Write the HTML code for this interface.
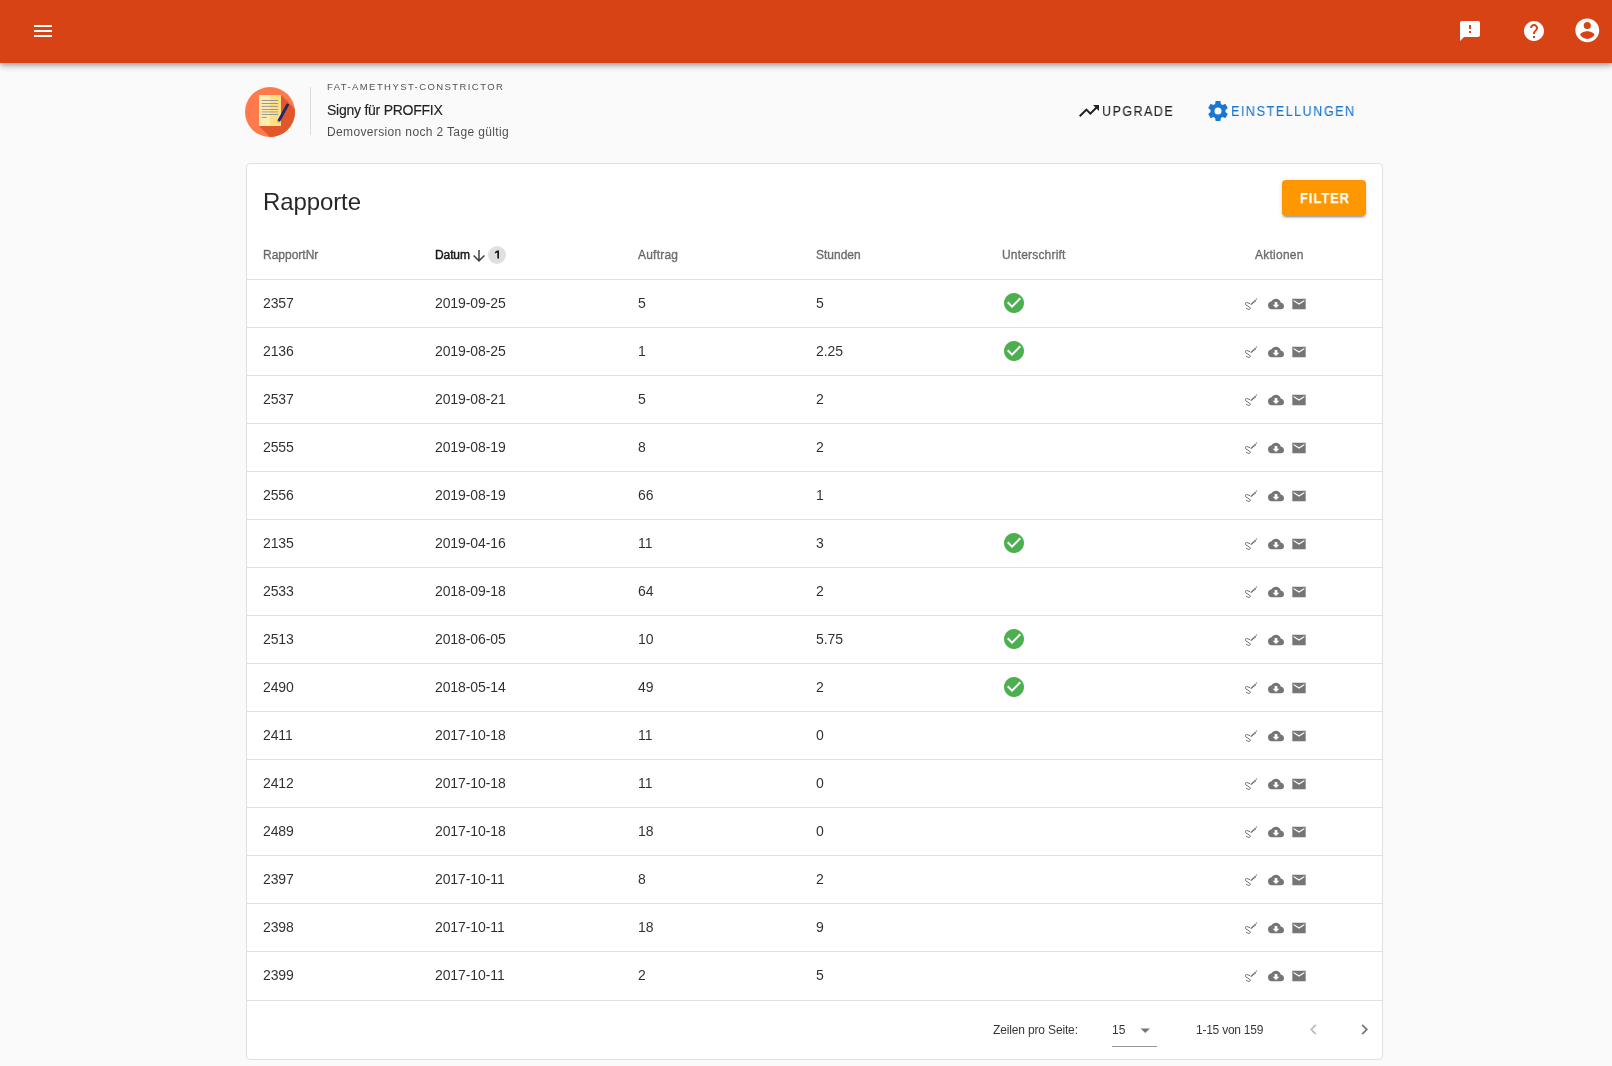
<!DOCTYPE html>
<html><head><meta charset="utf-8">
<style>
html,body{margin:0;padding:0;}
body{width:1612px;height:1066px;overflow:hidden;background:#fafafa;position:relative;font-family:"Liberation Sans",sans-serif;color:rgba(0,0,0,.87);}
.a{position:absolute;}
.t{position:absolute;white-space:nowrap;line-height:1;will-change:transform;}
svg{position:absolute;display:block;}
#bar{left:0;top:0;width:1612px;height:63px;background:#d84315;box-shadow:0 2px 4px -1px rgba(0,0,0,.2),0 4px 5px 0 rgba(0,0,0,.14),0 1px 10px 0 rgba(0,0,0,.12);z-index:2;}
#card{left:246px;top:163px;width:1135px;height:895px;border:1px solid #e0e0e0;border-radius:4px;background:#fff;}
.hd{font-size:12px;color:rgba(0,0,0,.5);-webkit-text-stroke:0.4px currentColor;}
.cell{font-size:14px;color:rgba(0,0,0,.82);letter-spacing:-0.1px;}
.dv{position:absolute;left:247px;width:1135px;height:1px;background:#e0e0e0;}
</style></head><body>
<div id="bar" class="a">
  <svg style="left:31px;top:19px" width="24" height="24" viewBox="0 0 24 24"><path fill="#fff" d="M3 18h18v-2H3v2zm0-5h18v-2H3v2zm0-7v2h18V6H3z"/></svg>
  <svg style="left:1458px;top:19px" width="24" height="24" viewBox="0 0 24 24"><path fill="#fff" d="M20 2H4c-1.1 0-1.99.9-1.99 2L2 22l4-4h14c1.1 0 2-.9 2-2V4c0-1.1-.9-2-2-2zm-7 12h-2v-2h2v2zm0-4h-2V6h2v4z"/></svg>
  <svg style="left:1522px;top:19px" width="24" height="24" viewBox="0 0 24 24"><path fill="#fff" d="M12 2C6.48 2 2 6.48 2 12s4.48 10 10 10 10-4.48 10-10S17.52 2 12 2zm1 17h-2v-2h2v2zm2.07-7.75l-.9.92C13.45 12.9 13 13.5 13 15h-2v-.5c0-1.1.45-2.1 1.17-2.83l1.24-1.26c.37-.36.59-.86.59-1.41 0-1.1-.9-2-2-2s-2 .9-2 2H8c0-2.21 1.79-4 4-4s4 1.79 4 4c0 .88-.36 1.68-.93 2.25z"/></svg>
  <svg style="left:1573.4px;top:16.2px" width="28.6" height="28.6" viewBox="0 0 24 24"><path fill="#fff" d="M12,19.2C9.5,19.2 7.29,17.92 6,16C6.03,14 10,12.9 12,12.9C14,12.9 17.97,14 18,16C16.71,17.92 14.5,19.2 12,19.2M12,5A3,3 0 0,1 15,8A3,3 0 0,1 12,11A3,3 0 0,1 9,8A3,3 0 0,1 12,5M12,2A10,10 0 0,0 2,12A10,10 0 0,0 12,22A10,10 0 0,0 22,12C22,6.47 17.5,2 12,2Z"/></svg>
</div>

<!-- brand -->
<svg style="left:245px;top:87px" width="50" height="50" viewBox="0 0 50 50">
  <defs><clipPath id="cc"><circle cx="25" cy="25" r="25"/></clipPath></defs>
  <circle cx="25" cy="25" r="25" fill="#ff7a4a"/>
  <g clip-path="url(#cc)"><polygon points="36,8 36,39 14,39 60,85 90,62" fill="#e1572b"/></g>
  <rect x="14" y="8" width="11" height="31" fill="#ffecb0"/>
  <rect x="25" y="8" width="11" height="31" fill="#ffdf86"/>
  <g stroke="#8c8f96" stroke-width="0.9">
    <line x1="16.6" y1="13.5" x2="33.2" y2="13.5"/>
    <line x1="16.6" y1="16.5" x2="33.2" y2="16.5"/>
    <line x1="16.6" y1="19.4" x2="33.2" y2="19.4"/>
    <line x1="16.6" y1="22.5" x2="33.2" y2="22.5"/>
    <line x1="16.6" y1="24.9" x2="33.2" y2="24.9" stroke="#b5ac90" stroke-width="1.2"/>
    <line x1="16.6" y1="27.5" x2="33.2" y2="27.5"/>
    <line x1="16.6" y1="30.4" x2="21.8" y2="30.4"/>
  </g>
  <line x1="43.1" y1="16.9" x2="33.6" y2="34.3" stroke="#1d2a6b" stroke-width="2.9" stroke-linecap="butt"/>
  <polygon points="34.9,35.04 32.3,33.56 32.4,36.6" fill="#f2b619"/>
</svg>
<div class="a" style="left:310px;top:87px;width:1px;height:48px;background:#dcdcdc"></div>
<div class="t" style="left:327.3px;top:82.4px;font-size:9.5px;letter-spacing:1.42px;color:rgba(0,0,0,.7)">FAT-AMETHYST-CONSTRICTOR</div>
<div class="t" style="left:327px;top:103.2px;font-size:14px;letter-spacing:-0.25px;-webkit-text-stroke:0.15px currentColor;color:rgba(0,0,0,.87)">Signy für PROFFIX</div>
<div class="t" style="left:327px;top:125.7px;font-size:12px;letter-spacing:0.36px;color:rgba(0,0,0,.7)">Demoversion noch 2 Tage gültig</div>

<!-- actions -->
<svg style="left:1077px;top:99px" width="24" height="24" viewBox="0 0 24 24"><path fill="rgba(0,0,0,.87)" d="M16,6L18.29,8.29L13.41,13.17L9.41,9.17L2,16.59L3.41,18L9.41,12L13.41,16L19.71,9.71L22,12V6H16Z"/></svg>
<div class="t" style="left:1102px;top:104.4px;font-size:14px;letter-spacing:1.56px;-webkit-text-stroke:0.1px currentColor;transform:scaleX(.9);transform-origin:0 0;color:rgba(0,0,0,.87)">UPGRADE</div>
<svg style="left:1205.6px;top:98.7px" width="24" height="24" viewBox="0 0 24 24"><path fill="#1976d2" d="M12,15.5A3.5,3.5 0 0,1 8.5,12A3.5,3.5 0 0,1 12,8.5A3.5,3.5 0 0,1 15.5,12A3.5,3.5 0 0,1 12,15.5M19.43,12.97C19.47,12.65 19.5,12.33 19.5,12C19.5,11.67 19.47,11.34 19.43,11L21.54,9.37C21.73,9.22 21.78,8.95 21.66,8.73L19.66,5.27C19.54,5.05 19.27,4.96 19.05,5.05L16.56,6.05C16.04,5.66 15.5,5.32 14.87,5.07L14.5,2.42C14.46,2.18 14.25,2 14,2H10C9.75,2 9.54,2.18 9.5,2.42L9.13,5.07C8.5,5.32 7.96,5.66 7.44,6.05L4.95,5.05C4.73,4.96 4.46,5.05 4.34,5.27L2.34,8.73C2.21,8.95 2.27,9.22 2.46,9.37L4.57,11C4.53,11.34 4.5,11.67 4.5,12C4.5,12.33 4.53,12.65 4.57,12.97L2.46,14.63C2.27,14.78 2.21,15.05 2.34,15.27L4.34,18.73C4.46,18.95 4.73,19.03 4.95,18.95L7.44,17.94C7.96,18.34 8.5,18.68 9.13,18.93L9.5,21.58C9.54,21.82 9.75,22 10,22H14C14.25,22 14.46,21.82 14.5,21.58L14.87,18.93C15.5,18.67 16.04,18.34 16.56,17.94L19.05,18.95C19.27,19.03 19.54,18.95 19.66,18.73L21.66,15.27C21.78,15.05 21.73,14.78 21.54,14.63L19.43,12.97Z"/></svg>
<div class="t" style="left:1231px;top:104.4px;font-size:14px;letter-spacing:1.68px;-webkit-text-stroke:0.1px currentColor;transform:scaleX(.9);transform-origin:0 0;color:#1976d2">EINSTELLUNGEN</div>

<svg width="0" height="0" style="position:absolute;left:0;top:0">
  <defs>
    <g id="chk"><path fill="#4caf50" d="M12 2C6.5 2 2 6.5 2 12S6.5 22 12 22 22 17.5 22 12 17.5 2 12 2M10 17L5 12L6.41 10.59L10 14.17L17.59 6.58L19 8L10 17Z"/></g>
    <g id="cld"><path fill="rgba(0,0,0,.54)" d="M17,13L12,18L7,13H10V9H14V13M19.35,10.03C18.67,6.59 15.64,4 12,4C9.11,4 6.6,5.64 5.35,8.03C2.34,8.36 0,10.9 0,14A6,6 0 0,0 6,20H19A5,5 0 0,0 24,15C24,12.36 21.95,10.22 19.35,10.03Z"/></g>
    <g id="mail"><path fill="rgba(0,0,0,.54)" d="M22 4H2v16h20V4zm-2 4l-8 5-8-5V6l8 5 8-5v2z"/></g>
    <g id="sig" fill="none" stroke="rgba(0,0,0,.54)" stroke-linecap="round" stroke-linejoin="round">
      <path stroke-width="1" d="M6.7 7.6 C5.5 7.2 4.0 6.3 3.2 6.5 C2.3 6.7 2.0 7.8 2.8 8.8 L7.2 11.7 C7.8 12.2 7.0 13.6 6.0 13.5 C5.0 13.4 3.8 12.6 3.2 12.3"/>
      <path stroke-width="1.5" d="M8.2 8.3 L12.4 4.6"/>
      <path stroke-width="1.1" d="M13.4 3.0 L13.6 2.8"/>
    </g>
  </defs>
</svg>
<div id="card" class="a"></div>
<div class="t" style="left:263px;top:189.5px;font-size:24px;letter-spacing:-0.1px;color:rgba(0,0,0,.85)">Rapporte</div>
<div class="a" style="left:1282px;top:180px;width:84px;height:36px;background:#ff9800;border-radius:4px;box-shadow:0 3px 1px -2px rgba(0,0,0,.2),0 2px 2px 0 rgba(0,0,0,.14),0 1px 5px 0 rgba(0,0,0,.12)"></div>
<div class="t" style="left:1299.5px;top:190.9px;font-size:14px;font-weight:bold;letter-spacing:1.24px;-webkit-text-stroke:0.25px currentColor;transform:scaleX(.9);transform-origin:0 0;color:#fff">FILTER</div>

<!-- header row -->
<div class="t hd" style="left:263px;top:248.8px">RapportNr</div>
<div class="t hd" style="left:435px;top:248.8px;color:rgba(0,0,0,.87);-webkit-text-stroke:0.45px currentColor;letter-spacing:-0.1px">Datum</div>
<svg style="left:470px;top:247px" width="18" height="18" viewBox="0 0 24 24"><path fill="rgba(0,0,0,.75)" d="M11,4H13V16L18.5,10.5L19.92,11.92L12,19.84L4.08,11.92L5.5,10.5L11,16V4Z"/></svg>
<div class="a" style="left:488px;top:246px;width:18px;height:18px;border-radius:9px;background:#e0e0e0"></div>
<svg style="left:488px;top:246px" width="18" height="18" viewBox="0 0 18 18"><path fill="rgba(0,0,0,.87)" d="M9.3 4.5H11V12.6H9.3V6.6L6.9 7.4V6.1L9.1 4.5Z"/></svg>
<div class="t hd" style="left:638px;top:248.8px;letter-spacing:0.22px">Auftrag</div>
<div class="t hd" style="left:816px;top:248.8px">Stunden</div>
<div class="t hd" style="left:1002px;top:248.8px;letter-spacing:0.18px">Unterschrift</div>
<div class="t hd" style="left:1255.4px;top:248.8px;letter-spacing:0.25px">Aktionen</div>

<!--ROWS-->
<div class="dv" style="top:279px"></div>
<div class="t cell" style="left:263px;top:295.9px">2357</div>
<div class="t cell" style="left:435px;top:295.9px">2019-09-25</div>
<div class="t cell" style="left:638px;top:295.9px">5</div>
<div class="t cell" style="left:816px;top:295.9px">5</div>
<svg style="left:1002px;top:291px" width="24" height="24" viewBox="0 0 24 24"><use href="#chk"/></svg>
<svg style="left:1243px;top:296px" width="16" height="16" viewBox="0 0 16 16"><use href="#sig"/></svg>
<svg style="left:1267.5px;top:296.2px" width="16" height="16" viewBox="0 0 24 24"><use href="#cld"/></svg>
<svg style="left:1291.2px;top:296.2px" width="16" height="16" viewBox="0 0 24 24"><use href="#mail"/></svg>
<div class="dv" style="top:327px"></div>
<div class="t cell" style="left:263px;top:343.9px">2136</div>
<div class="t cell" style="left:435px;top:343.9px">2019-08-25</div>
<div class="t cell" style="left:638px;top:343.9px">1</div>
<div class="t cell" style="left:816px;top:343.9px">2.25</div>
<svg style="left:1002px;top:339px" width="24" height="24" viewBox="0 0 24 24"><use href="#chk"/></svg>
<svg style="left:1243px;top:344px" width="16" height="16" viewBox="0 0 16 16"><use href="#sig"/></svg>
<svg style="left:1267.5px;top:344.2px" width="16" height="16" viewBox="0 0 24 24"><use href="#cld"/></svg>
<svg style="left:1291.2px;top:344.2px" width="16" height="16" viewBox="0 0 24 24"><use href="#mail"/></svg>
<div class="dv" style="top:375px"></div>
<div class="t cell" style="left:263px;top:391.9px">2537</div>
<div class="t cell" style="left:435px;top:391.9px">2019-08-21</div>
<div class="t cell" style="left:638px;top:391.9px">5</div>
<div class="t cell" style="left:816px;top:391.9px">2</div>
<svg style="left:1243px;top:392px" width="16" height="16" viewBox="0 0 16 16"><use href="#sig"/></svg>
<svg style="left:1267.5px;top:392.2px" width="16" height="16" viewBox="0 0 24 24"><use href="#cld"/></svg>
<svg style="left:1291.2px;top:392.2px" width="16" height="16" viewBox="0 0 24 24"><use href="#mail"/></svg>
<div class="dv" style="top:423px"></div>
<div class="t cell" style="left:263px;top:439.9px">2555</div>
<div class="t cell" style="left:435px;top:439.9px">2019-08-19</div>
<div class="t cell" style="left:638px;top:439.9px">8</div>
<div class="t cell" style="left:816px;top:439.9px">2</div>
<svg style="left:1243px;top:440px" width="16" height="16" viewBox="0 0 16 16"><use href="#sig"/></svg>
<svg style="left:1267.5px;top:440.2px" width="16" height="16" viewBox="0 0 24 24"><use href="#cld"/></svg>
<svg style="left:1291.2px;top:440.2px" width="16" height="16" viewBox="0 0 24 24"><use href="#mail"/></svg>
<div class="dv" style="top:471px"></div>
<div class="t cell" style="left:263px;top:487.9px">2556</div>
<div class="t cell" style="left:435px;top:487.9px">2019-08-19</div>
<div class="t cell" style="left:638px;top:487.9px">66</div>
<div class="t cell" style="left:816px;top:487.9px">1</div>
<svg style="left:1243px;top:488px" width="16" height="16" viewBox="0 0 16 16"><use href="#sig"/></svg>
<svg style="left:1267.5px;top:488.2px" width="16" height="16" viewBox="0 0 24 24"><use href="#cld"/></svg>
<svg style="left:1291.2px;top:488.2px" width="16" height="16" viewBox="0 0 24 24"><use href="#mail"/></svg>
<div class="dv" style="top:519px"></div>
<div class="t cell" style="left:263px;top:535.9px">2135</div>
<div class="t cell" style="left:435px;top:535.9px">2019-04-16</div>
<div class="t cell" style="left:638px;top:535.9px">11</div>
<div class="t cell" style="left:816px;top:535.9px">3</div>
<svg style="left:1002px;top:531px" width="24" height="24" viewBox="0 0 24 24"><use href="#chk"/></svg>
<svg style="left:1243px;top:536px" width="16" height="16" viewBox="0 0 16 16"><use href="#sig"/></svg>
<svg style="left:1267.5px;top:536.2px" width="16" height="16" viewBox="0 0 24 24"><use href="#cld"/></svg>
<svg style="left:1291.2px;top:536.2px" width="16" height="16" viewBox="0 0 24 24"><use href="#mail"/></svg>
<div class="dv" style="top:567px"></div>
<div class="t cell" style="left:263px;top:583.9px">2533</div>
<div class="t cell" style="left:435px;top:583.9px">2018-09-18</div>
<div class="t cell" style="left:638px;top:583.9px">64</div>
<div class="t cell" style="left:816px;top:583.9px">2</div>
<svg style="left:1243px;top:584px" width="16" height="16" viewBox="0 0 16 16"><use href="#sig"/></svg>
<svg style="left:1267.5px;top:584.2px" width="16" height="16" viewBox="0 0 24 24"><use href="#cld"/></svg>
<svg style="left:1291.2px;top:584.2px" width="16" height="16" viewBox="0 0 24 24"><use href="#mail"/></svg>
<div class="dv" style="top:615px"></div>
<div class="t cell" style="left:263px;top:631.9px">2513</div>
<div class="t cell" style="left:435px;top:631.9px">2018-06-05</div>
<div class="t cell" style="left:638px;top:631.9px">10</div>
<div class="t cell" style="left:816px;top:631.9px">5.75</div>
<svg style="left:1002px;top:627px" width="24" height="24" viewBox="0 0 24 24"><use href="#chk"/></svg>
<svg style="left:1243px;top:632px" width="16" height="16" viewBox="0 0 16 16"><use href="#sig"/></svg>
<svg style="left:1267.5px;top:632.2px" width="16" height="16" viewBox="0 0 24 24"><use href="#cld"/></svg>
<svg style="left:1291.2px;top:632.2px" width="16" height="16" viewBox="0 0 24 24"><use href="#mail"/></svg>
<div class="dv" style="top:663px"></div>
<div class="t cell" style="left:263px;top:679.9px">2490</div>
<div class="t cell" style="left:435px;top:679.9px">2018-05-14</div>
<div class="t cell" style="left:638px;top:679.9px">49</div>
<div class="t cell" style="left:816px;top:679.9px">2</div>
<svg style="left:1002px;top:675px" width="24" height="24" viewBox="0 0 24 24"><use href="#chk"/></svg>
<svg style="left:1243px;top:680px" width="16" height="16" viewBox="0 0 16 16"><use href="#sig"/></svg>
<svg style="left:1267.5px;top:680.2px" width="16" height="16" viewBox="0 0 24 24"><use href="#cld"/></svg>
<svg style="left:1291.2px;top:680.2px" width="16" height="16" viewBox="0 0 24 24"><use href="#mail"/></svg>
<div class="dv" style="top:711px"></div>
<div class="t cell" style="left:263px;top:727.9px">2411</div>
<div class="t cell" style="left:435px;top:727.9px">2017-10-18</div>
<div class="t cell" style="left:638px;top:727.9px">11</div>
<div class="t cell" style="left:816px;top:727.9px">0</div>
<svg style="left:1243px;top:728px" width="16" height="16" viewBox="0 0 16 16"><use href="#sig"/></svg>
<svg style="left:1267.5px;top:728.2px" width="16" height="16" viewBox="0 0 24 24"><use href="#cld"/></svg>
<svg style="left:1291.2px;top:728.2px" width="16" height="16" viewBox="0 0 24 24"><use href="#mail"/></svg>
<div class="dv" style="top:759px"></div>
<div class="t cell" style="left:263px;top:775.9px">2412</div>
<div class="t cell" style="left:435px;top:775.9px">2017-10-18</div>
<div class="t cell" style="left:638px;top:775.9px">11</div>
<div class="t cell" style="left:816px;top:775.9px">0</div>
<svg style="left:1243px;top:776px" width="16" height="16" viewBox="0 0 16 16"><use href="#sig"/></svg>
<svg style="left:1267.5px;top:776.2px" width="16" height="16" viewBox="0 0 24 24"><use href="#cld"/></svg>
<svg style="left:1291.2px;top:776.2px" width="16" height="16" viewBox="0 0 24 24"><use href="#mail"/></svg>
<div class="dv" style="top:807px"></div>
<div class="t cell" style="left:263px;top:823.9px">2489</div>
<div class="t cell" style="left:435px;top:823.9px">2017-10-18</div>
<div class="t cell" style="left:638px;top:823.9px">18</div>
<div class="t cell" style="left:816px;top:823.9px">0</div>
<svg style="left:1243px;top:824px" width="16" height="16" viewBox="0 0 16 16"><use href="#sig"/></svg>
<svg style="left:1267.5px;top:824.2px" width="16" height="16" viewBox="0 0 24 24"><use href="#cld"/></svg>
<svg style="left:1291.2px;top:824.2px" width="16" height="16" viewBox="0 0 24 24"><use href="#mail"/></svg>
<div class="dv" style="top:855px"></div>
<div class="t cell" style="left:263px;top:871.9px">2397</div>
<div class="t cell" style="left:435px;top:871.9px">2017-10-11</div>
<div class="t cell" style="left:638px;top:871.9px">8</div>
<div class="t cell" style="left:816px;top:871.9px">2</div>
<svg style="left:1243px;top:872px" width="16" height="16" viewBox="0 0 16 16"><use href="#sig"/></svg>
<svg style="left:1267.5px;top:872.2px" width="16" height="16" viewBox="0 0 24 24"><use href="#cld"/></svg>
<svg style="left:1291.2px;top:872.2px" width="16" height="16" viewBox="0 0 24 24"><use href="#mail"/></svg>
<div class="dv" style="top:903px"></div>
<div class="t cell" style="left:263px;top:919.9px">2398</div>
<div class="t cell" style="left:435px;top:919.9px">2017-10-11</div>
<div class="t cell" style="left:638px;top:919.9px">18</div>
<div class="t cell" style="left:816px;top:919.9px">9</div>
<svg style="left:1243px;top:920px" width="16" height="16" viewBox="0 0 16 16"><use href="#sig"/></svg>
<svg style="left:1267.5px;top:920.2px" width="16" height="16" viewBox="0 0 24 24"><use href="#cld"/></svg>
<svg style="left:1291.2px;top:920.2px" width="16" height="16" viewBox="0 0 24 24"><use href="#mail"/></svg>
<div class="dv" style="top:951px"></div>
<div class="t cell" style="left:263px;top:967.9px">2399</div>
<div class="t cell" style="left:435px;top:967.9px">2017-10-11</div>
<div class="t cell" style="left:638px;top:967.9px">2</div>
<div class="t cell" style="left:816px;top:967.9px">5</div>
<svg style="left:1243px;top:968px" width="16" height="16" viewBox="0 0 16 16"><use href="#sig"/></svg>
<svg style="left:1267.5px;top:968.2px" width="16" height="16" viewBox="0 0 24 24"><use href="#cld"/></svg>
<svg style="left:1291.2px;top:968.2px" width="16" height="16" viewBox="0 0 24 24"><use href="#mail"/></svg>
<div class="dv" style="top:1000px"></div>
<!--/ROWS-->
<!-- footer -->
<div class="t" style="left:992.5px;top:1023.6px;font-size:12px;letter-spacing:-0.15px;color:rgba(0,0,0,.8)">Zeilen pro Seite:</div>
<div class="t" style="left:1112px;top:1023.6px;font-size:12px;color:rgba(0,0,0,.8)">15</div>
<svg style="left:1134.2px;top:1018.9px" width="22.5" height="22.5" viewBox="0 0 24 24"><path fill="rgba(0,0,0,.54)" d="M7,10L12,15L17,10H7Z"/></svg>
<div class="a" style="left:1112px;top:1046px;width:45px;height:1px;background:rgba(0,0,0,.42)"></div>
<div class="t" style="left:1196px;top:1023.6px;font-size:12px;letter-spacing:-0.24px;color:rgba(0,0,0,.8)">1-15 von 159</div>
<svg style="left:1303.4px;top:1019.3px" width="21" height="21" viewBox="0 0 24 24"><path fill="rgba(0,0,0,.26)" d="M15.41,16.58L10.83,12L15.41,7.41L14,6L8,12L14,18L15.41,16.58Z"/></svg>
<svg style="left:1353.6px;top:1019.3px" width="21" height="21" viewBox="0 0 24 24"><path fill="rgba(0,0,0,.54)" d="M8.59,16.58L13.17,12L8.59,7.41L10,6L16,12L10,18L8.59,16.58Z"/></svg>
</body></html>
